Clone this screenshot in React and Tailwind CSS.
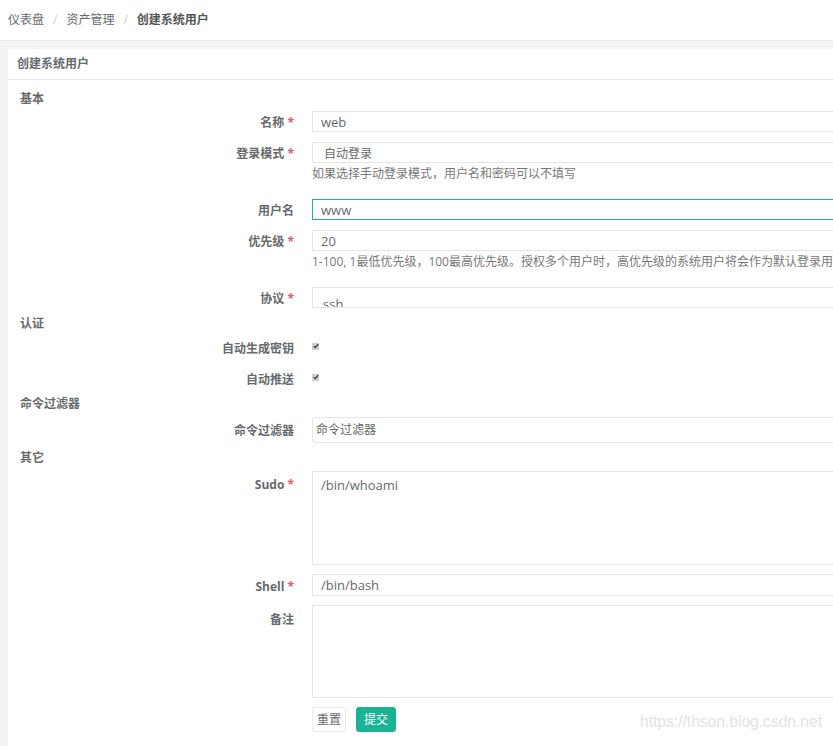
import React from 'react';

const font = { fontFamily: '"Open Sans", "Noto Sans CJK SC", sans-serif' };

function Label({ text, required, className = '' }) {
    return (
        <div className={`w-[274px] shrink-0 text-right text-[12px] font-bold leading-[18px] text-[#676a6c] ${className}`}>
            {text}
            {required && <span className="text-[#ed5565]"> *</span>}
        </div>
    );
}

function Section({ title, className = '' }) {
    return (
        <div className={`h-[18px] text-[12px] font-bold leading-[18px] text-[#676a6c] ${className}`}>{title}</div>
    );
}

function Help({ children }) {
    return (
        <div className="ml-[292px] mt-[2px] h-[18px] whitespace-nowrap text-[12px] leading-[18px] text-[#777]">{children}</div>
    );
}

function InputRow({ label, required, value, className = '', focused = false, inputClass = '' }) {
    return (
        <div className={`flex items-center ${className}`}>
            <Label text={label} required={required} className="pt-[3px]" />
            <div
                className={`ml-[18px] flex h-[21px] flex-1 items-center overflow-hidden border bg-white px-[8px] pt-[2px] text-[13px] text-[#676a6c] ${focused ? 'border-[#1ab394]' : 'border-[#e5e6e7]'} ${inputClass}`}
            >
                {value}
            </div>
        </div>
    );
}

function Check() {
    return (
        <div className="ml-[18px] mb-[6px] flex h-[7px] w-[7px] items-center justify-center bg-[#cfcfcf]">
            <svg viewBox="0 0 8 8" className="h-[6px] w-[6px]">
                <path d="M1 4.2 L3 6.2 L7 1.5" fill="none" stroke="#333" strokeWidth="1.6" />
            </svg>
        </div>
    );
}

export default function App() {
    return (
        <div className="relative h-[746px] w-[833px] overflow-hidden bg-[#f3f3f4]" style={font}>
            {/* breadcrumb */}
            <div className="flex h-[41px] w-[1100px] items-center border-b border-[#e7eaec] bg-white pl-[8px] text-[12px] text-[#676a6c]">
                <span>仪表盘</span>
                <span className="px-[9px] text-[#ccc]">/</span>
                <span>资产管理</span>
                <span className="px-[9px] text-[#ccc]">/</span>
                <span className="font-bold text-[#555]">创建系统用户</span>
            </div>

            {/* card */}
            <div className="ml-[8px] mt-[8px] w-[1100px] bg-white">
                <div className="flex h-[31px] items-center border-b border-[#e7eaec] pl-[9px] text-[12px] font-bold text-[#676a6c]">
                    创建系统用户
                </div>

                <div className="pl-[12px] pt-[10px] pb-[20px]">
                    <Section title="基本" />
                    <InputRow className="mt-[3px]" label="名称" required value="web" />
                    <InputRow className="mt-[10px]" label="登录模式" required value={<span className="pl-[3px] text-[12px]">自动登录</span>} />
                    <Help>如果选择手动登录模式，用户名和密码可以不填写</Help>
                    <InputRow className="mt-[16px]" label="用户名" value="www" focused />
                    <InputRow className="mt-[10px]" label="优先级" required value="20" />
                    <Help>1-100, 1最低优先级，100最高优先级。授权多个用户时，高优先级的系统用户将会作为默认登录用户</Help>
                    <InputRow
                        className="mt-[16px]"
                        label="协议"
                        required
                        inputClass="!items-start !pt-0"
                        value={<span className="mt-[7px] pl-[2px] leading-[18px]">ssh</span>}
                    />

                    <Section title="认证" className="mt-[7px]" />
                    <div className="mt-[7px] flex items-center">
                        <Label text="自动生成密钥" />
                        <Check />
                    </div>
                    <div className="mt-[13px] flex items-center">
                        <Label text="自动推送" />
                        <Check />
                    </div>

                    <Section title="命令过滤器" className="mt-[6px]" />
                    <div className="mt-[4px] flex items-center">
                        <Label text="命令过滤器" className="pt-[2px]" />
                        <div className="ml-[18px] flex h-[26px] flex-1 items-center rounded-[3px] border border-[#e5e6e7] bg-white pl-[3px] text-[12px] text-[#666]">
                            命令过滤器
                        </div>
                    </div>

                    <Section title="其它" className="mt-[6px]" />
                    <div className="mt-[4px] flex items-start">
                        <Label text="Sudo" required className="mt-[5px]" />
                        <div className="ml-[18px] h-[94px] flex-1 border border-[#e5e6e7] bg-white px-[8px] pt-[4px] text-[13px] leading-[18px] text-[#676a6c]">
                            /bin/whoami
                        </div>
                    </div>
                    <InputRow className="mt-[9px]" label="Shell" required value="/bin/bash" inputClass="!h-[22px]" />
                    <div className="mt-[9px] flex items-start">
                        <Label text="备注" className="mt-[6px]" />
                        <div className="ml-[18px] h-[93px] flex-1 border border-[#e5e6e7] bg-white" />
                    </div>

                    <div className="ml-[292px] mt-[9px] flex gap-[10px]">
                        <button className="flex h-[25px] w-[34px] items-center justify-center rounded-[3px] border border-[#e7eaec] bg-white text-[12px] text-[#676a6c]">
                            重置
                        </button>
                        <button className="flex h-[25px] w-[40px] items-center justify-center rounded-[3px] border border-[#1ab394] bg-[#1ab394] text-[12px] text-white">
                            提交
                        </button>
                    </div>
                </div>
            </div>

            {/* watermark */}
            <div
                className="absolute left-[640px] top-[711px] text-[15.6px] leading-[22px] text-[#e3e3e3]"
                style={{ fontFamily: '"Liberation Sans", Arial, sans-serif' }}
            >
                https://thson.blog.csdn.net
            </div>
        </div>
    );
}
